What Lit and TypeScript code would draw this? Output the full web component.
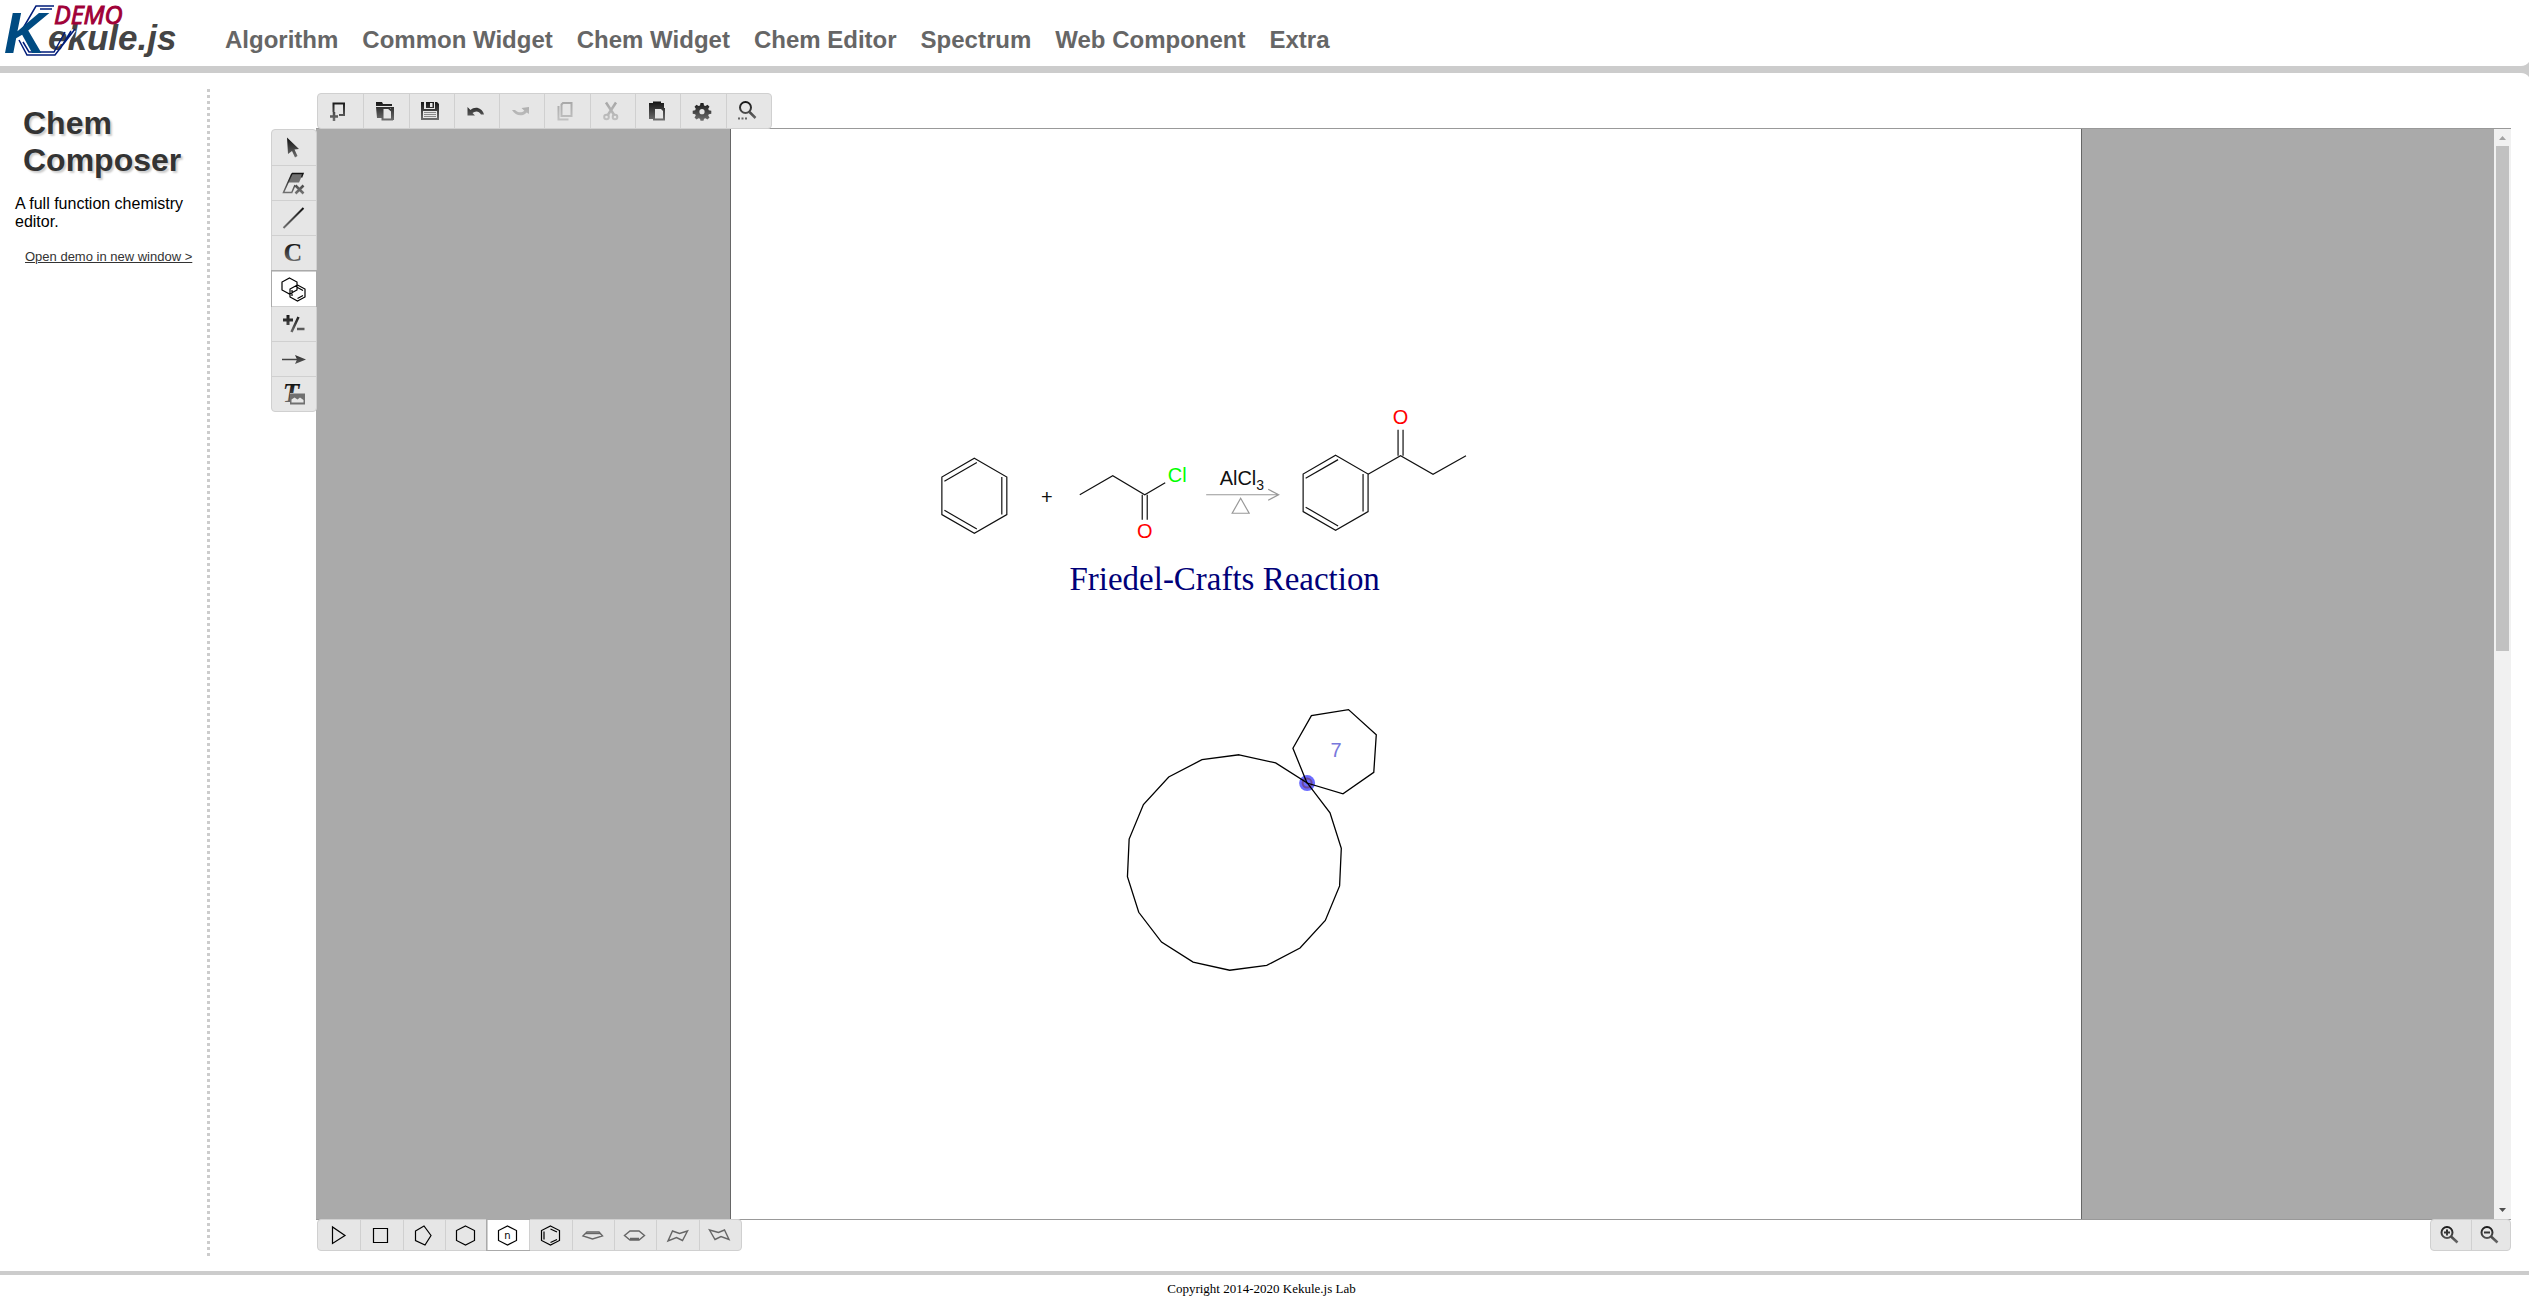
import { LitElement, html, svg, css, nothing } from "lit";
import type { SVGTemplateResult } from "lit";
import { customElement, property, state } from "lit/decorators.js";
import { classMap } from "lit/directives/class-map.js";

interface Tool {
  id: string;
  label: string;
  disabled?: boolean;
}

const icons: Record<string, SVGTemplateResult> = {
  create: svg`<path class="line" d="M5.5 13V4.5H16V16h-5"/><path class="line bold" d="M6 13v9M2 17.5h8"/>`,
  open: svg`<path class="solid" d="M2 3h6l1 2h9v2H2zM2 8h18v13H9v-2H3z"/><path class="paper" d="M9 9h8v11H9z"/><path class="line" d="M8.500 9h6l3.500 3v8.500H8.500z"/>`,
  save: svg`<path class="solid" d="M2 3h3v7h11V3h2l2 2v16H2z"/><path class="solid" d="M7 3h8v6H7z"/><path class="paper" d="M11 4h2.500v4H11z"/><path class="paper" d="M4 12h14v7H4z"/><path class="thin" d="M5 13.500h12M5 15.500h12M5 17.500h12"/>`,
  undo: svg`<path class="solid" d="M2.500 8v8.500H10L7.500 14c3-2.500 6.500-2 8.500 1.500h3C17 8.500 10 7 5.500 11z"/>`,
  redo: svg`<path class="solid" d="M19 8v7l-2.300-1.600C12.500 18 5.500 17 2 11h3c3 3 6.500 3 9.300.8L11.500 9z"/>`,
  copy: svg`<path class="line" d="M8 4h8.500v13H6.500V5.500zM3.500 7v13.500h10"/>`,
  cut: svg`<path class="line bold" d="M6 3.500l8.500 13M16 3.500l-8.500 13"/><circle class="line" cx="6.500" cy="18" r="2.300"/><circle class="line" cx="15" cy="18" r="2.300"/>`,
  paste: svg`<path class="solid" d="M3 4h4V2.500h8V4h3v5h1v12.500H7V20H3z"/><path class="paper" d="M9 10h6l2 2v7.500H9z"/>`,
  settings: svg`<path class="solid" d="M9.500 4h3l.5 2.500 1.500.6 2-1.300 2 2-1.300 2 .6 1.500 2.500.5v3l-2.500.5-.6 1.200 1.300 2-2 2-2-1.300-1.500.6-.5 2h-3l-.5-2-1.500-.6-2 1.300-2-2 1.300-2-.6-1.200L1.700 14.800v-3l2.500-.5.600-1.500-1.300-2 2-2 2 1.300L9 6.500z"/><circle class="paper" cx="11" cy="12.700" r="2.600"/>`,
  inspect: svg`<circle class="line" cx="9.500" cy="8.500" r="5.5"/><path class="line bold" d="M13.500 13l6 6"/><path class="line" stroke-dasharray="2 1.500" d="M2 19.500h9"/>`,
  select: svg`<path class="solid" d="M5 1.500l12 11.500-4.500.5L15.500 20l-2.500 1.500L10 15l-4 3z"/>`,
  erase: svg`<path class="shaded" d="M10 2.500h11l-4 9h-11z"/><path class="line slim" d="M10 2.500h11l-1.500 4M10 2.500L1.500 21.500h9M13 14l-3 7"/><path class="line bold" d="M13.500 14.500l8 8M21.500 14.500l-8 8"/>`,
  bond: svg`<path class="line" d="M1.500 22L21.500 2"/>`,
  atom: svg`<text class="glyph" x="11" y="20" font-size="26">C</text>`,
  ring: svg`<path class="ink" d="M7.500 1L15 5v8l-7.500 4-7.500-4v-8zM15.500 8l7.500 4v8l-7.500 4L8 20v-8zM15.500 10.500l5.500 3M21 18.500l-5.500 3M10 13v6"/>`,
  charge: svg`<path class="line heavy" d="M6 3v10M1 8h10"/><path class="line bold" d="M16.500 5L9.500 20M15 17h7.500"/>`,
  arrow: svg`<path class="line slim" d="M0 12.500h16"/><path class="solid" d="M13 8l11 4.500L13 17l2-4.500z"/>`,
  text: svg`<text class="glyph tilt" x="9" y="20" font-size="27">T</text><path class="paper" d="M8 11h15v12H8z"/><path class="shaded" d="M8 11.500h15v11H8z"/><path class="paper" d="M9.500 20.500v-3l3-2 3 2 2.500-2 3.500 2.500v2.500z"/>`,
  ring3: svg`<path class="ink" d="M5.500 4v16.500L18 12.500z"/>`,
  ring4: svg`<path class="ink" d="M4.500 5.500h14v14h-14z"/>`,
  ring5: svg`<path class="ink" d="M3.500 8L12 3l7 9.500-6 9.500-9.500-4.500z"/>`,
  ring6: svg`<path class="ink" d="M11.500 3L20.500 7.500v10l-9 4.500-9-4.500v-10z"/>`,
  ringN: svg`<path class="ink" d="M11.500 3L20.500 7.500v10l-9 4.500-9-4.500v-10z"/><text class="letter" x="11.500" y="15.500" font-size="10">n</text>`,
  benzene: svg`<path class="ink" d="M11.500 3L20.500 7.500v10l-9 4.500-9-4.500v-10zM5 8.500v8M11.500 6l6.500 3M11.500 19.500l6.500-3"/>`,
  flat5: svg`<path class="soft" d="M6 9h12l3.500 4-10 3-9.500-3z"/><path class="soft" d="M5 10.500h14"/>`,
  flat6: svg`<path class="soft" d="M7 8h9l5.500 4.500L16 17H7l-5.500-4.500zM7 15.500h9"/>`,
  chairA: svg`<path class="soft" d="M6.500 8l7 2.500 8-2.500-5 9.500-6-3L2 18z"/>`,
  chairB: svg`<path class="soft" d="M1.500 7l9 2.500 6-2.500 4.500 9.500-8-3-6 3z"/>`,
  zoomIn: svg`<circle class="line" cx="9" cy="9.500" r="5.500"/><path class="line" d="M9 6.500v6M6 9.500h6"/><path class="line bold" d="M13 13.500l6.500 6"/>`,
  zoomOut: svg`<circle class="line" cx="9" cy="9.500" r="5.500"/><path class="line" d="M6 9.500h6"/><path class="line bold" d="M13 13.500l6.500 6"/>`,
};

@customElement("tool-bar")
class ToolBar extends LitElement {
  @property({ attribute: false }) tools: Tool[] = [];
  @property() label = "";
  @property() active = "";
  @property({ reflect: true }) side = "top";

  static styles = css`
    :host { display: block; }
    .bar {
      box-sizing: border-box;
      display: grid;
      height: 100%;
      background: #e6e6e6;
      border: 1px solid #d0d0d0;
      border-radius: 4px;
    }
    .top, .bottom { grid-auto-flow: column; grid-auto-columns: 1fr; }
    .left { grid-auto-rows: 1fr; }
    button {
      display: flex;
      align-items: center;
      justify-content: center;
      min-width: 0;
      min-height: 0;
      margin: 0;
      padding: 0 1px 0 0;
      color: #222;
      background: none;
      border: 0 solid #d0d0d0;
    }
    .top button + button, .bottom button + button { border-left-width: 1px; }
    .left button + button { border-top-width: 1px; }
    button.active { background: #fff; outline: 1px solid #aaa; outline-offset: 0; }
    button:disabled svg { opacity: 0.3; }
    svg { display: block; flex: none; width: 24px; height: 24px; overflow: visible; }
    .line { fill: none; stroke: url(#shade); stroke-width: 2; }
    .slim { stroke-width: 1.5; }
    .bold { stroke-width: 2.500; }
    .heavy { stroke-width: 3; }
    .thin { fill: none; stroke: #888; stroke-width: 1; }
    .solid { fill: url(#shade); }
    .shaded { fill: #707070; }
    .paper { fill: #e6e6e6; }
    .ink { fill: none; stroke: #000; stroke-width: 1.2; }
    .soft { fill: none; stroke: #666; stroke-width: 1.4; }
    .glyph { fill: url(#shade); font-family: "Liberation Serif", serif; font-weight: bold; text-anchor: middle; }
    .tilt { font-style: italic; }
    .letter { fill: #000; font-family: "DejaVu Sans", sans-serif; text-anchor: middle; }
  `;

  private choose(id: string) {
    this.dispatchEvent(new CustomEvent("choose", { detail: id }));
  }

  render() {
    return html`<div class="bar ${this.side}" role="toolbar" aria-label=${this.label}>
      ${this.tools.map(
        (t) => html`<button
          type="button"
          class=${classMap({ active: t.id === this.active })}
          ?disabled=${t.disabled ?? false}
          aria-label=${t.label}
          @click=${() => this.choose(t.id)}
        >
          <svg viewBox="0 0 24 24" aria-hidden="true">
            <defs>
              <linearGradient id="shade" gradientUnits="userSpaceOnUse" x1="0" y1="2" x2="0" y2="23">
                <stop offset="0" stop-color="#111" />
                <stop offset="1" stop-color="#777" />
              </linearGradient>
            </defs>
            ${icons[t.id] ?? nothing}
          </svg>
        </button>`
      )}
    </div>`;
  }
}

type Point = [number, number];

/** Corners of a regular polygon; the first lies at the given angle in degrees. */
function polygon(cx: number, cy: number, r: number, sides: number, start: number): Point[] {
  return Array.from({ length: sides }, (_, i) => {
    const a = ((start + (i * 360) / sides) * Math.PI) / 180;
    return [cx + r * Math.cos(a), cy + r * Math.sin(a)] as Point;
  });
}

const toPoints = (pts: Point[]) => pts.map(([x, y]) => `${x.toFixed(1)},${y.toFixed(1)}`).join(" ");

/** Benzene ring with second bond lines moved towards the centre. */
function benzene(cx: number, cy: number) {
  const p = polygon(cx, cy, 37.5, 6, -90);
  const gap = 5;
  return svg`<polygon points=${toPoints(p)} />
    ${[1, 3, 5].map((i) => {
      const a = p[i];
      const b = p[(i + 1) % 6];
      const mx = cx - (a[0] + b[0]) / 2;
      const my = cy - (a[1] + b[1]) / 2;
      const len = Math.hypot(mx, my);
      const dx = (mx / len) * gap;
      const dy = (my / len) * gap;
      return svg`<line x1=${a[0] + dx} y1=${a[1] + dy} x2=${b[0] + dx} y2=${b[1] + dy} />`;
    })}`;
}

@customElement("chem-sheet")
class ChemSheet extends LitElement {
  static styles = css`
    :host { display: block; }
    svg { display: block; width: 100%; }
    .bonds { fill: none; stroke: #111; stroke-width: 1.2; }
    .ring { fill: none; stroke: #000; stroke-width: 1.3; }
    .condition { fill: none; stroke: #999; stroke-width: 1.2; }
    text { font: 20px "Liberation Sans", Arial, sans-serif; fill: #111; }
    .mid { text-anchor: middle; }
    .oxygen { fill: #f00; }
    .chlorine { fill: #0f0; }
    .small { font-size: 14px; }
    .caption { font: 33px "Liberation Serif", Georgia, serif; fill: #000078; }
    .count { fill: #7878dc; }
    .spot { fill: #4646ff; fill-opacity: 0.8; }
    .core { fill: none; stroke: #6c4a9c; stroke-width: 2; }
  `;

  render() {
    return html`<svg viewBox="0 0 1350 1090" role="img" aria-label="Friedel-Crafts Reaction">
      <g class="bonds">
        ${benzene(243.5, 367)}
        <path d="M349 366L382 347L414 366L434.500 354M411.500 366v25M416.500 366v25" />
        ${benzene(605, 364)}
        <path d="M637.500 345.500L670 327L702.500 345.500L735.500 327M667.500 327v-26M672.500 327v-26" />
      </g>
      <text class="mid" x="316" y="375">+</text>
      <text class="chlorine" x="437" y="353">Cl</text>
      <text class="oxygen mid" x="414" y="409">O</text>
      <text x="489" y="356">AlCl<tspan class="small" dy="5">3</tspan></text>
      <path class="condition" d="M475.500 366H548M537.500 360.500L548 366L537.500 371.500M510 369.500L518.500 384.500H501.500z" />
      <text class="oxygen mid" x="670" y="295">O</text>
      <text class="caption mid" x="494" y="461">Friedel-Crafts Reaction</text>
      <circle class="spot" cx="576.5" cy="654.5" r="8" />
      <circle class="core" cx="576.5" cy="654.5" r="4.500" />
      <polygon class="ring" points=${toPoints(polygon(503.7, 734, 107.9, 18, -87.5))} />
      <polygon class="ring" points=${toPoints(polygon(605.5, 622.5, 43.3, 7, 132.3))} />
      <text class="count mid" x="605.5" y="628">7</text>
    </svg>`;
  }
}

const mainTools: Tool[] = [
  { id: "create", label: "New" },
  { id: "open", label: "Open" },
  { id: "save", label: "Save" },
  { id: "undo", label: "Undo" },
  { id: "redo", label: "Redo", disabled: true },
  { id: "copy", label: "Copy", disabled: true },
  { id: "cut", label: "Cut", disabled: true },
  { id: "paste", label: "Paste" },
  { id: "settings", label: "Settings" },
  { id: "inspect", label: "Inspect" },
];
const drawTools: Tool[] = [
  { id: "select", label: "Select" },
  { id: "erase", label: "Erase" },
  { id: "bond", label: "Bond" },
  { id: "atom", label: "Atom" },
  { id: "ring", label: "Ring" },
  { id: "charge", label: "Charge" },
  { id: "arrow", label: "Arrow" },
  { id: "text", label: "Text and image" },
];
const ringTools: Tool[] = [
  { id: "ring3", label: "Three ring" },
  { id: "ring4", label: "Four ring" },
  { id: "ring5", label: "Five ring" },
  { id: "ring6", label: "Six ring" },
  { id: "ringN", label: "Ring of n atoms" },
  { id: "benzene", label: "Benzene" },
  { id: "flat5", label: "Flat five ring" },
  { id: "flat6", label: "Flat six ring" },
  { id: "chairA", label: "Chair, left" },
  { id: "chairB", label: "Chair, right" },
];
const zoomTools: Tool[] = [
  { id: "zoomIn", label: "Zoom in" },
  { id: "zoomOut", label: "Zoom out" },
];
const sections = ["Algorithm", "Common Widget", "Chem Widget", "Chem Editor", "Spectrum", "Web Component", "Extra"];

@customElement("app-root")
class AppRoot extends LitElement {
  @state() private drawTool = "ring";
  @state() private ringTool = "ringN";

  static styles = css`
    :host {
      display: flex;
      flex-direction: column;
      min-height: 100vh;
      background: #fff;
      font-family: "Liberation Sans", Arial, sans-serif;
    }
    header {
      position: relative;
      box-sizing: border-box;
      display: flex;
      height: 73px;
      border-bottom: 7px solid #ccc;
    }
    .flare { position: absolute; right: 0; top: 62px; width: 8px; height: 15px; fill: #ccc; }
    .logo { width: 225px; flex: none; }
    .logo svg { display: block; width: 190px; height: 66px; overflow: visible; }
    .logo text { font-family: "Liberation Sans", Arial, sans-serif; font-weight: bold; font-style: italic; }
    .initial { font-size: 58px; fill: #004b82; }
    .name { font-size: 35px; fill: #444; }
    .logo .demo { font: italic 25px "Open Sans", sans-serif; fill: #a00038; stroke: #a00038; stroke-width: 1; }
    .hex { fill: none; stroke: #001c7a; stroke-width: 1.5; }
    .halo { fill: none; stroke: #fff; stroke-width: 4; }
    nav { display: flex; gap: 24px; padding-top: 26px; }
    nav a { font-size: 24px; line-height: 28px; font-weight: bold; color: #666; text-decoration: none; white-space: nowrap; }
    main { flex: 1; display: flex; padding: 16px 18px 15px 0; }
    aside { box-sizing: border-box; flex: none; width: 210px; padding: 16px 8px 0 15px; border-right: 3px dotted #ccc; }
    h1 { margin: 0 0 16px 8px; font-size: 32px; line-height: 37px; color: #333; text-shadow: 2px 2px 2px #ccc; }
    p { margin: 0 0 18px; font-size: 16px; line-height: 18px; color: #000; }
    .open { display: block; margin-left: 10px; font-size: 13px; line-height: 15px; color: #333; white-space: nowrap; }
    .editor {
      flex: 1;
      min-width: 0;
      margin: 4px 0 5px 61px;
      display: grid;
      grid-template-columns: 45px 1fr;
      grid-template-rows: 35px 1fr 31px;
    }
    tool-bar { z-index: 1; }
    .main-tools { grid-area: 1 / 2; width: 455px; height: 36px; margin-left: 1px; }
    .draw-tools { grid-area: 2 / 1; width: 46px; height: 283px; margin-top: 1px; }
    .view {
      grid-area: 2 / 2;
      display: flex;
      min-height: 0;
      border: solid #999;
      border-width: 1px 0;
      background: #aaa;
    }
    .desk { flex: 1; min-width: 0; display: flex; justify-content: center; padding-left: 2px; }
    .sheet { width: 62%; background: #fff; border: solid #666; border-width: 0 1px; }
    .scroll { flex: none; width: 17px; display: flex; flex-direction: column; align-items: center; background: #f1f1f1; }
    .step { width: 17px; height: 17px; flex: none; fill: #a3a3a3; }
    .down { fill: #505050; }
    .track { flex: 1; width: 13px; }
    .thumb { height: 47.8%; background: #c1c1c1; }
    .below { grid-area: 3 / 2; display: flex; justify-content: space-between; margin: -1px 0 0 1px; }
    .below tool-bar { height: 32px; }
    .rings { width: 425px; }
    .zooms { width: 81px; }
    footer { padding: 6px 6px 5px 0; border-top: 4px solid #ccc; text-align: center; font: 13px/15px "Liberation Serif", "Times New Roman", serif; color: #000; }
  `;

  render() {
    return html`
      <header>
        <a class="logo" href="#" aria-label="Kekule.js demo">
          <svg viewBox="0 0 190 66">
            <text class="name" x="48" y="50">ekule.js</text>
            <path class="halo" d="M60 53L74 30" />
            <path class="hex" d="M22 30L36 6H54M40 9H52M75 29L55 55H27L19 40M71 31L60 49M65 32L54 52H29L23 42" />
            <text class="initial" x="4" y="53">K</text>
            <text class="demo" x="54" y="24">DEMO</text>
          </svg>
        </a>
        <nav aria-label="Demos">${sections.map((s) => html`<a href="#">${s}</a>`)}</nav>
        <svg class="flare" viewBox="0 0 8 15"><path d="M0 4Q5 4 8 0V15Q5 11 0 11z" /></svg>
      </header>
      <main>
        <aside>
          <h1>Chem Composer</h1>
          <p>A full function chemistry editor.</p>
          <a class="open" href="#">Open demo in new window &gt;</a>
        </aside>
        <section class="editor" aria-label="Editor">
          <tool-bar class="main-tools" side="top" label="File and edit" .tools=${mainTools}></tool-bar>
          <tool-bar
            class="draw-tools"
            side="left"
            label="Drawing"
            .tools=${drawTools}
            active=${this.drawTool}
            @choose=${(e: CustomEvent<string>) => (this.drawTool = e.detail)}
          ></tool-bar>
          <div class="view">
            <div class="desk"><div class="sheet"><chem-sheet></chem-sheet></div></div>
            <div class="scroll" aria-hidden="true">
              <svg class="step" viewBox="0 0 17 17"><path d="M5 11h7L8.500 7z" /></svg>
              <div class="track"><div class="thumb"></div></div>
              <svg class="step down" viewBox="0 0 17 17"><path d="M5 6h7l-3.500 4z" /></svg>
            </div>
          </div>
          <div class="below">
            <tool-bar
              class="rings"
              side="bottom"
              label="Rings"
              .tools=${ringTools}
              active=${this.ringTool}
              @choose=${(e: CustomEvent<string>) => (this.ringTool = e.detail)}
            ></tool-bar>
            <tool-bar class="zooms" side="bottom" label="Zoom" .tools=${zoomTools}></tool-bar>
          </div>
        </section>
      </main>
      <footer>Copyright 2014-2020 Kekule.js Lab</footer>
    `;
  }
}
